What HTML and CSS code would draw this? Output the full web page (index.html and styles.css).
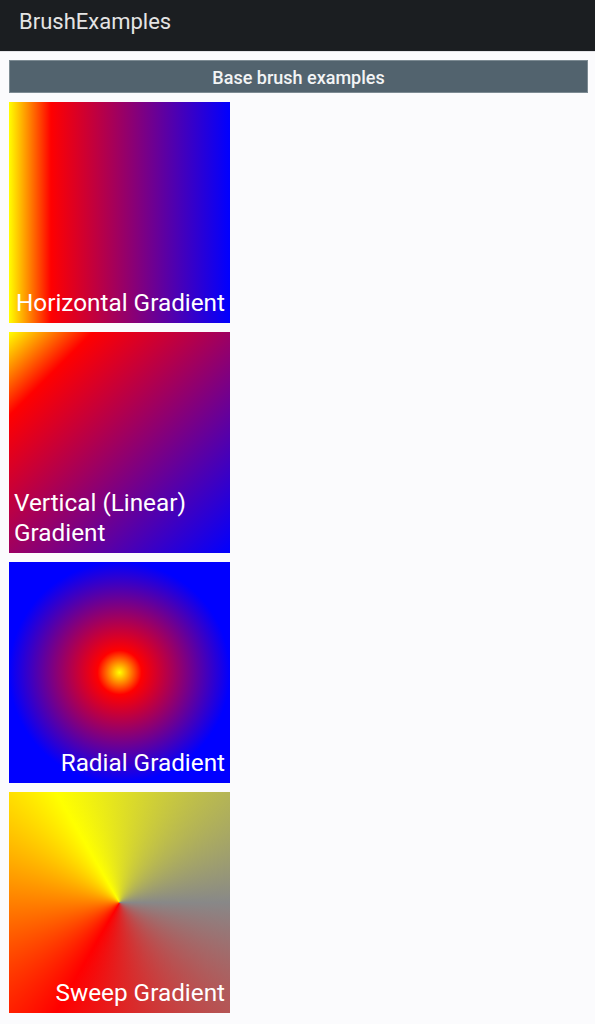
FILE: index.html
```html
<!DOCTYPE html>
<html>
<head>
<meta charset="utf-8">
<link rel="stylesheet" href="styles.css">
</head>
<body>
<header class="appbar"><span class="title">BrushExamples</span></header>
<main class="content">
  <div class="button">Base brush examples</div>
  <div class="tile horizontal"><span class="label">Horizontal Gradient</span></div>
  <div class="tile linear"><span class="label">Vertical (Linear) Gradient</span></div>
  <div class="tile radial"><span class="label">Radial Gradient</span></div>
  <div class="tile sweep"><span class="label">Sweep Gradient</span></div>
</main>
</body>
</html>
```
FILE: styles.css
```css
html, body {
  margin: 0;
  padding: 0;
  background: #fbfbfd;
  font-family: Roboto, "Liberation Sans", sans-serif;
}
.appbar {
  background: #1b1e21;
  display: flex;
  align-items: center;
  padding-left: 19px;
  border-bottom: 1px solid #e4e4e8;
  box-sizing: border-box;
  height: 52px;
}
.title {
  color: #e4e4e4;
  font-size: 22px;
  margin-top: -8px;
}
.content {
  padding: 8px 7px 0 9px;
  display: flex;
  flex-direction: column;
  gap: 9px;
  align-items: flex-start;
}
.button {
  align-self: stretch;
  height: 33px;
  background: #52636e;
  border: 1px solid #7d8b93;
  box-sizing: border-box;
  color: #f2f4f5;
  font-size: 18px;
  font-weight: 500;
  display: flex;
  align-items: center;
  justify-content: center;
  padding-top: 1px;
}
.tile {
  width: 221px;
  height: 221px;
  box-sizing: border-box;
  padding: 5px;
  display: flex;
  align-items: flex-end;
  justify-content: flex-end;
}
.label {
  color: #ffffff;
  font-size: 24.3px;
  line-height: 30px;
}
.horizontal {
  background: linear-gradient(to right, #ffff00 0%, #ff0000 19%, #0000ff 100%);
}
.linear {
  background: linear-gradient(to bottom right, #ffff00 0%, #ff0000 19%, #0000ff 100%);
}
.radial {
  background: radial-gradient(circle 110.5px at center, #ffff00 0%, #ff0000 20%, #0000ff 100%);
}
.sweep {
  background: conic-gradient(from 90deg, #888888 0deg, #ff0000 120deg, #ffff00 240deg, #888888 360deg);
}
```
